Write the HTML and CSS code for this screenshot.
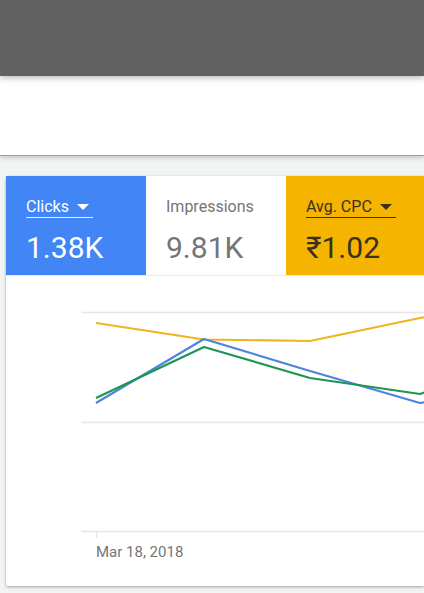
FILE: index.html
```html
<!DOCTYPE html>
<html>
<head>
<meta charset="utf-8">
<link rel="stylesheet" href="styles.css">
</head>
<body>
<header class="topbar"></header>
<div class="band"></div>
<main class="content">
  <section class="card">
    <div class="tiles">
      <div class="tile tile-blue">
        <div class="label"><span>Clicks</span><span class="caret"></span></div>
        <div class="value">1.38K</div>
      </div>
      <div class="tile tile-white">
        <div class="label plain"><span>Impressions</span></div>
        <div class="value">9.81K</div>
      </div>
      <div class="tile tile-yellow">
        <div class="label"><span>Avg. CPC</span><span class="caret"></span></div>
        <div class="value">₹1.02</div>
      </div>
    </div>
    <div class="chart">
      <svg class="chart-svg" width="418" height="310" viewBox="0 0 418 310">
        <line x1="75" y1="36.5" x2="418" y2="36.5" class="grid"/>
        <line x1="75" y1="146.5" x2="418" y2="146.5" class="grid"/>
        <line x1="75" y1="255.5" x2="418" y2="255.5" class="grid"/>
        <line x1="90.5" y1="256" x2="90.5" y2="262" class="grid"/>
        <polyline class="s-yellow" points="90,47 198,63.5 304,65 414,42 420,41"/>
        <polyline class="s-blue" points="90,127 198,63 304,95 414,127 420,126"/>
        <polyline class="s-green" points="90,122 198,71 304,102 414,118 420,116"/>
        <text x="90" y="281" class="axis-label">Mar 18, 2018</text>
      </svg>
    </div>
  </section>
</main>
</body>
</html>
```
FILE: styles.css
```css
html, body {
  margin: 0;
  padding: 0;
}
body {
  background: #f2f3f3;
  font-family: Roboto, "Liberation Sans", sans-serif;
  overflow: hidden;
  width: 424px;
  height: 593px;
}
.topbar {
  height: 76px;
  background: #616161;
  box-shadow: 0 2px 6px rgba(0, 0, 0, 0.28);
  position: relative;
  z-index: 2;
}
.band {
  height: 79px;
  background: #ffffff;
  border-bottom: 1px solid #9e9e9e;
  box-shadow: 0 2px 4px rgba(0, 0, 0, 0.18);
  position: relative;
  z-index: 1;
}
.content {
  padding: 20px 0 0 6px;
}
.card {
  width: 418px;
  height: 410px;
  background: #ffffff;
  border-radius: 2px 0 0 2px;
  box-shadow: 0 1px 3px rgba(0, 0, 0, 0.35);
  display: flex;
  flex-direction: column;
}
.tiles {
  display: flex;
  height: 99px;
  border-bottom: 1px solid #e8e8e8;
}
.tile {
  width: 140px;
  box-sizing: border-box;
  padding: 21px 0 0 20px;
}
.tile-blue {
  background: #4285f4;
  color: #ffffff;
}
.tile-white {
  color: #757575;
}
.tile-yellow {
  background: #f4b400;
  color: #3a3020;
  flex: 1;
}
.label {
  display: inline-flex;
  align-items: center;
  font-size: 16px;
  line-height: 19px;
  padding-bottom: 1px;
  border-bottom: 1px solid currentColor;
}
.label.plain {
  border-bottom-color: transparent;
}
.tile-blue .label {
  border-bottom-color: rgba(255, 255, 255, 0.85);
}
.caret {
  width: 0;
  height: 0;
  margin-left: 8px;
  margin-right: 4px;
  border-left: 6px solid transparent;
  border-right: 6px solid transparent;
  border-top: 6px solid currentColor;
}
.tile-blue .caret {
  border-top-color: #ffffff;
}
.value {
  margin-top: 11px;
  font-size: 30px;
  line-height: 37px;
}
.chart {
  flex: 1;
}
.chart-svg {
  display: block;
}
.grid {
  stroke: #e6e6e6;
  stroke-width: 1.5;
}
.s-yellow, .s-blue, .s-green {
  fill: none;
  stroke-width: 2.2;
  stroke-linejoin: round;
}
.s-yellow { stroke: #f0b41e; }
.s-blue { stroke: #4d84dd; }
.s-green { stroke: #1f9551; }
.axis-label {
  font-family: Roboto, "Liberation Sans", sans-serif;
  font-size: 15px;
  fill: #757575;
}
```
